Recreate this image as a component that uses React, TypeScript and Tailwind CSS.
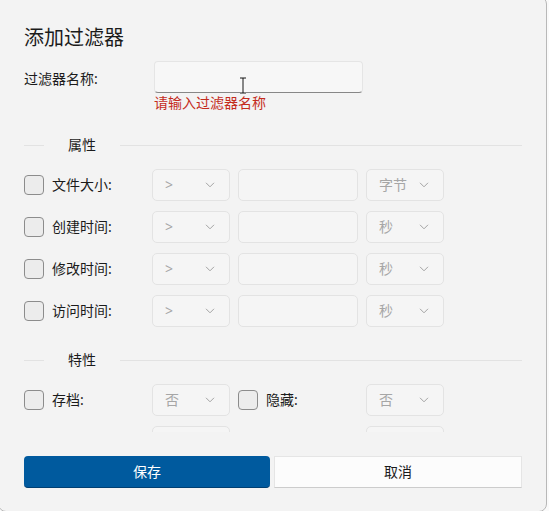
import React from "react"

function Chevron() {
  return (
    <svg width="10" height="6" viewBox="0 0 10 6" fill="none">
      <path d="M1 0.8 L5 4.8 L9 0.8" stroke="#a3a3a3" strokeWidth="1" />
    </svg>
  )
}

function Combo({ value }: { value?: string }) {
  return (
    <div className="w-[78px] h-8 shrink-0 rounded-[5px] border border-[#e3e3e3] bg-[#f5f5f5] flex items-center justify-between pl-3 pr-[14px] text-sm text-[#a6a6a6]">
      {value && (
        <>
          <span>{value}</span>
          <Chevron />
        </>
      )}
    </div>
  )
}

function Check({ label }: { label: string }) {
  return (
    <div className="w-[128px] shrink-0 flex items-center gap-2">
      <div className="w-5 h-5 rounded-[4px] border border-[#8c8c8c] bg-[#ececec]" />
      <span className="text-sm text-[#1b1b1b]">{label}</span>
    </div>
  )
}

function Section({ title }: { title: string }) {
  return (
    <div className="flex items-center h-5">
      <div className="w-5 h-px bg-[#e2e2e2]" />
      <span className="mx-6 text-sm text-[#1b1b1b]">{title}</span>
      <div className="flex-1 h-px bg-[#e2e2e2]" />
    </div>
  )
}

function RangeRow({ label, unit }: { label: string; unit: string }) {
  return (
    <div className="flex items-center h-8">
      <Check label={label} />
      <div className="flex items-center gap-2">
        <Combo value=">" />
        <div className="w-[120px] h-8 rounded-[5px] border border-[#e3e3e3] bg-[#f5f5f5]" />
        <Combo value={unit} />
      </div>
    </div>
  )
}

export default function App() {
  return (
    <div className="w-[549px] h-[511px] overflow-hidden bg-[#fafafa] font-['Noto_Sans','Noto_Sans_CJK_SC',sans-serif]">
      <div className="-ml-[2px] -mt-[4px] w-[549px] h-[516px] rounded-lg border border-[#b8b8b8] bg-[#f3f3f3] pl-[25px] pr-6 pt-[27px] flex flex-col">
        <h1 className="text-[20px] leading-7 text-[#1b1b1b]">添加过滤器</h1>

        <div className="mt-[9px] h-[371px] overflow-hidden">
          {/* name */}
          <div className="flex items-center h-8">
            <span className="w-[130px] shrink-0 text-sm text-[#1b1b1b] pt-[3px]">过滤器名称:</span>
            <div className="relative w-[209px] h-8 rounded-[4px] border border-[#e5e5e5] border-b-[#878787] bg-[#f7f7f7]">
              <svg
                className="absolute left-[84px] top-[15px]"
                width="8"
                height="17"
                viewBox="0 0 8 17"
              >
                <path
                  d="M1 1 H7 M4 1 V16 M1 16 H7"
                  stroke="#fff"
                  strokeWidth="2.5"
                  fill="none"
                />
                <path
                  d="M1 1 H7 M4 1 V16 M1 16 H7"
                  stroke="#111"
                  strokeWidth="1"
                  fill="none"
                />
              </svg>
            </div>
          </div>
          <p className="ml-[130px] text-sm leading-5 text-[#c42b1c]">请输入过滤器名称</p>

          <div className="mt-[22px]">
            <Section title="属性" />
          </div>
          <div className="mt-[14px] flex flex-col gap-[10px]">
            <RangeRow label="文件大小:" unit="字节" />
            <RangeRow label="创建时间:" unit="秒" />
            <RangeRow label="修改时间:" unit="秒" />
            <RangeRow label="访问时间:" unit="秒" />
          </div>

          <div className="mt-[23px]">
            <Section title="特性" />
          </div>
          <div className="mt-[14px] flex flex-col gap-[10px]">
            <div className="flex items-center h-8">
              <Check label="存档:" />
              <Combo value="否" />
              <div className="ml-2">
                <Check label="隐藏:" />
              </div>
              <Combo value="否" />
            </div>
            {/* next row, scrolled out of view */}
            <div className="flex items-center h-8 pl-[128px]">
              <Combo />
              <div className="w-[136px] shrink-0" />
              <Combo />
            </div>
          </div>
        </div>

        <div className="mt-6 flex gap-1">
          <button className="flex-1 h-8 rounded-[4px] bg-[#005a9e] border-b border-[#003f72] text-sm text-white">
            保存
          </button>
          <button className="flex-1 h-8 bg-[#fcfcfc] border border-[#e5e5e5] border-b-[#cccccc] text-sm text-[#1b1b1b]">
            取消
          </button>
        </div>
      </div>
    </div>
  )
}
